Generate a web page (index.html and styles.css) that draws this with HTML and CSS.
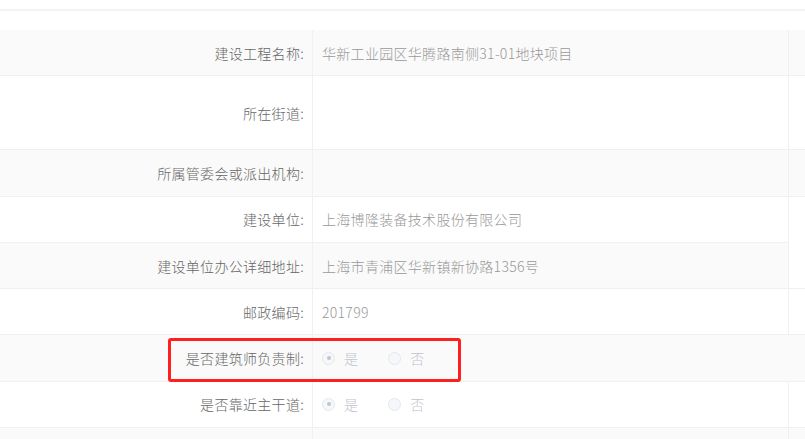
FILE: index.html
```html
<!DOCTYPE html>
<html lang="zh-CN">
<head>
<meta charset="utf-8">
<title>建设工程信息</title>
<link rel="stylesheet" href="styles.css">
</head>
<body>
<div class="page">
  <div class="topbar"></div>
  <div class="sheet">
    <div class="row gray">
      <div class="label">建设工程名称:</div>
      <div class="value">华新工业园区华腾路南侧31-01地块项目</div>
      <div class="extra"></div>
    </div>
    <div class="row tall">
      <div class="label">所在街道:</div>
      <div class="value"></div>
      <div class="extra"></div>
    </div>
    <div class="row gray">
      <div class="label">所属管委会或派出机构:</div>
      <div class="value"></div>
      <div class="extra"></div>
    </div>
    <div class="group">
      <div class="group-rows">
        <div class="row">
          <div class="label">建设单位:</div>
          <div class="value">上海博隆装备技术股份有限公司</div>
        </div>
        <div class="row gray">
          <div class="label">建设单位办公详细地址:</div>
          <div class="value">上海市青浦区华新镇新协路1356号</div>
        </div>
      </div>
      <div class="extra span"></div>
    </div>
    <div class="row">
      <div class="label">邮政编码:</div>
      <div class="value">201799</div>
      <div class="extra"></div>
    </div>
    <div class="row gray">
      <div class="label">是否建筑师负责制:</div>
      <div class="value wide">
        <span class="radio checked"><span class="dot"></span><span class="rtext">是</span></span>
        <span class="radio"><span class="dot"></span><span class="rtext">否</span></span>
      </div>
    </div>
    <div class="row">
      <div class="label">是否靠近主干道:</div>
      <div class="value">
        <span class="radio checked"><span class="dot"></span><span class="rtext">是</span></span>
        <span class="radio"><span class="dot"></span><span class="rtext">否</span></span>
      </div>
      <div class="extra"></div>
    </div>
    <div class="row gray">
      <div class="label"></div>
      <div class="value"></div>
      <div class="extra"></div>
    </div>
  </div>
  <div class="highlight"></div>
</div>
</body>
</html>
```

FILE: styles.css
```css
html, body {
  margin: 0;
  padding: 0;
  background: #ffffff;
  overflow: hidden;
}

.page {
  position: relative;
  width: 805px;
  height: 439px;
  overflow: hidden;
  font-family: "Noto Sans CJK SC", "Noto Sans", sans-serif;
  font-size: 14px;
  font-weight: 300;
  letter-spacing: 0.3px;
}

.topbar {
  height: 2px;
  margin-top: 9px;
  margin-bottom: 19px;
  background: #f3f3f3;
}

.sheet {
  display: flex;
  flex-direction: column;
}

.row {
  display: flex;
  height: 46.3px;
  box-sizing: border-box;
  border-bottom: 1px solid #f0f0f0;
  background: #ffffff;
}

.row.gray {
  background: #fafafa;
}

.row.tall {
  height: 74px;
}

.label {
  width: 313px;
  flex: none;
  box-sizing: border-box;
  border-right: 1px solid #f0f0f0;
  display: flex;
  align-items: center;
  justify-content: flex-end;
  padding-right: 8px;
  color: #666666;
}

.value {
  width: 476px;
  flex: none;
  box-sizing: border-box;
  border-right: 1px solid #f0f0f0;
  display: flex;
  align-items: center;
  padding-left: 9px;
  color: #999999;
}

.value.wide {
  flex: 1;
  border-right: none;
}

.extra {
  flex: 1;
}

.group {
  display: flex;
  border-bottom: 1px solid #f0f0f0;
}

.group-rows {
  display: flex;
  flex-direction: column;
}

.group-rows .row:last-child {
  border-bottom: none;
  height: 45.3px;
}

.extra.span {
  background: #ffffff;
}

.radio {
  display: inline-flex;
  align-items: center;
  margin-right: 30px;
  color: #c0c4cc;
}

.dot {
  width: 13px;
  height: 13px;
  box-sizing: border-box;
  border: 1px solid #e4e7ed;
  border-radius: 50%;
  background: #f5f7fa;
  position: relative;
}

.radio.checked .dot::after {
  content: "";
  position: absolute;
  left: 50%;
  top: 50%;
  width: 4px;
  height: 4px;
  margin: -2px 0 0 -2px;
  border-radius: 50%;
  background: #c0c4cc;
}

.rtext {
  margin-left: 9px;
}

.highlight {
  position: absolute;
  left: 168px;
  top: 338px;
  width: 293px;
  height: 44px;
  box-sizing: border-box;
  border: 3px solid #ff1f1f;
  border-radius: 3px;
}
```
